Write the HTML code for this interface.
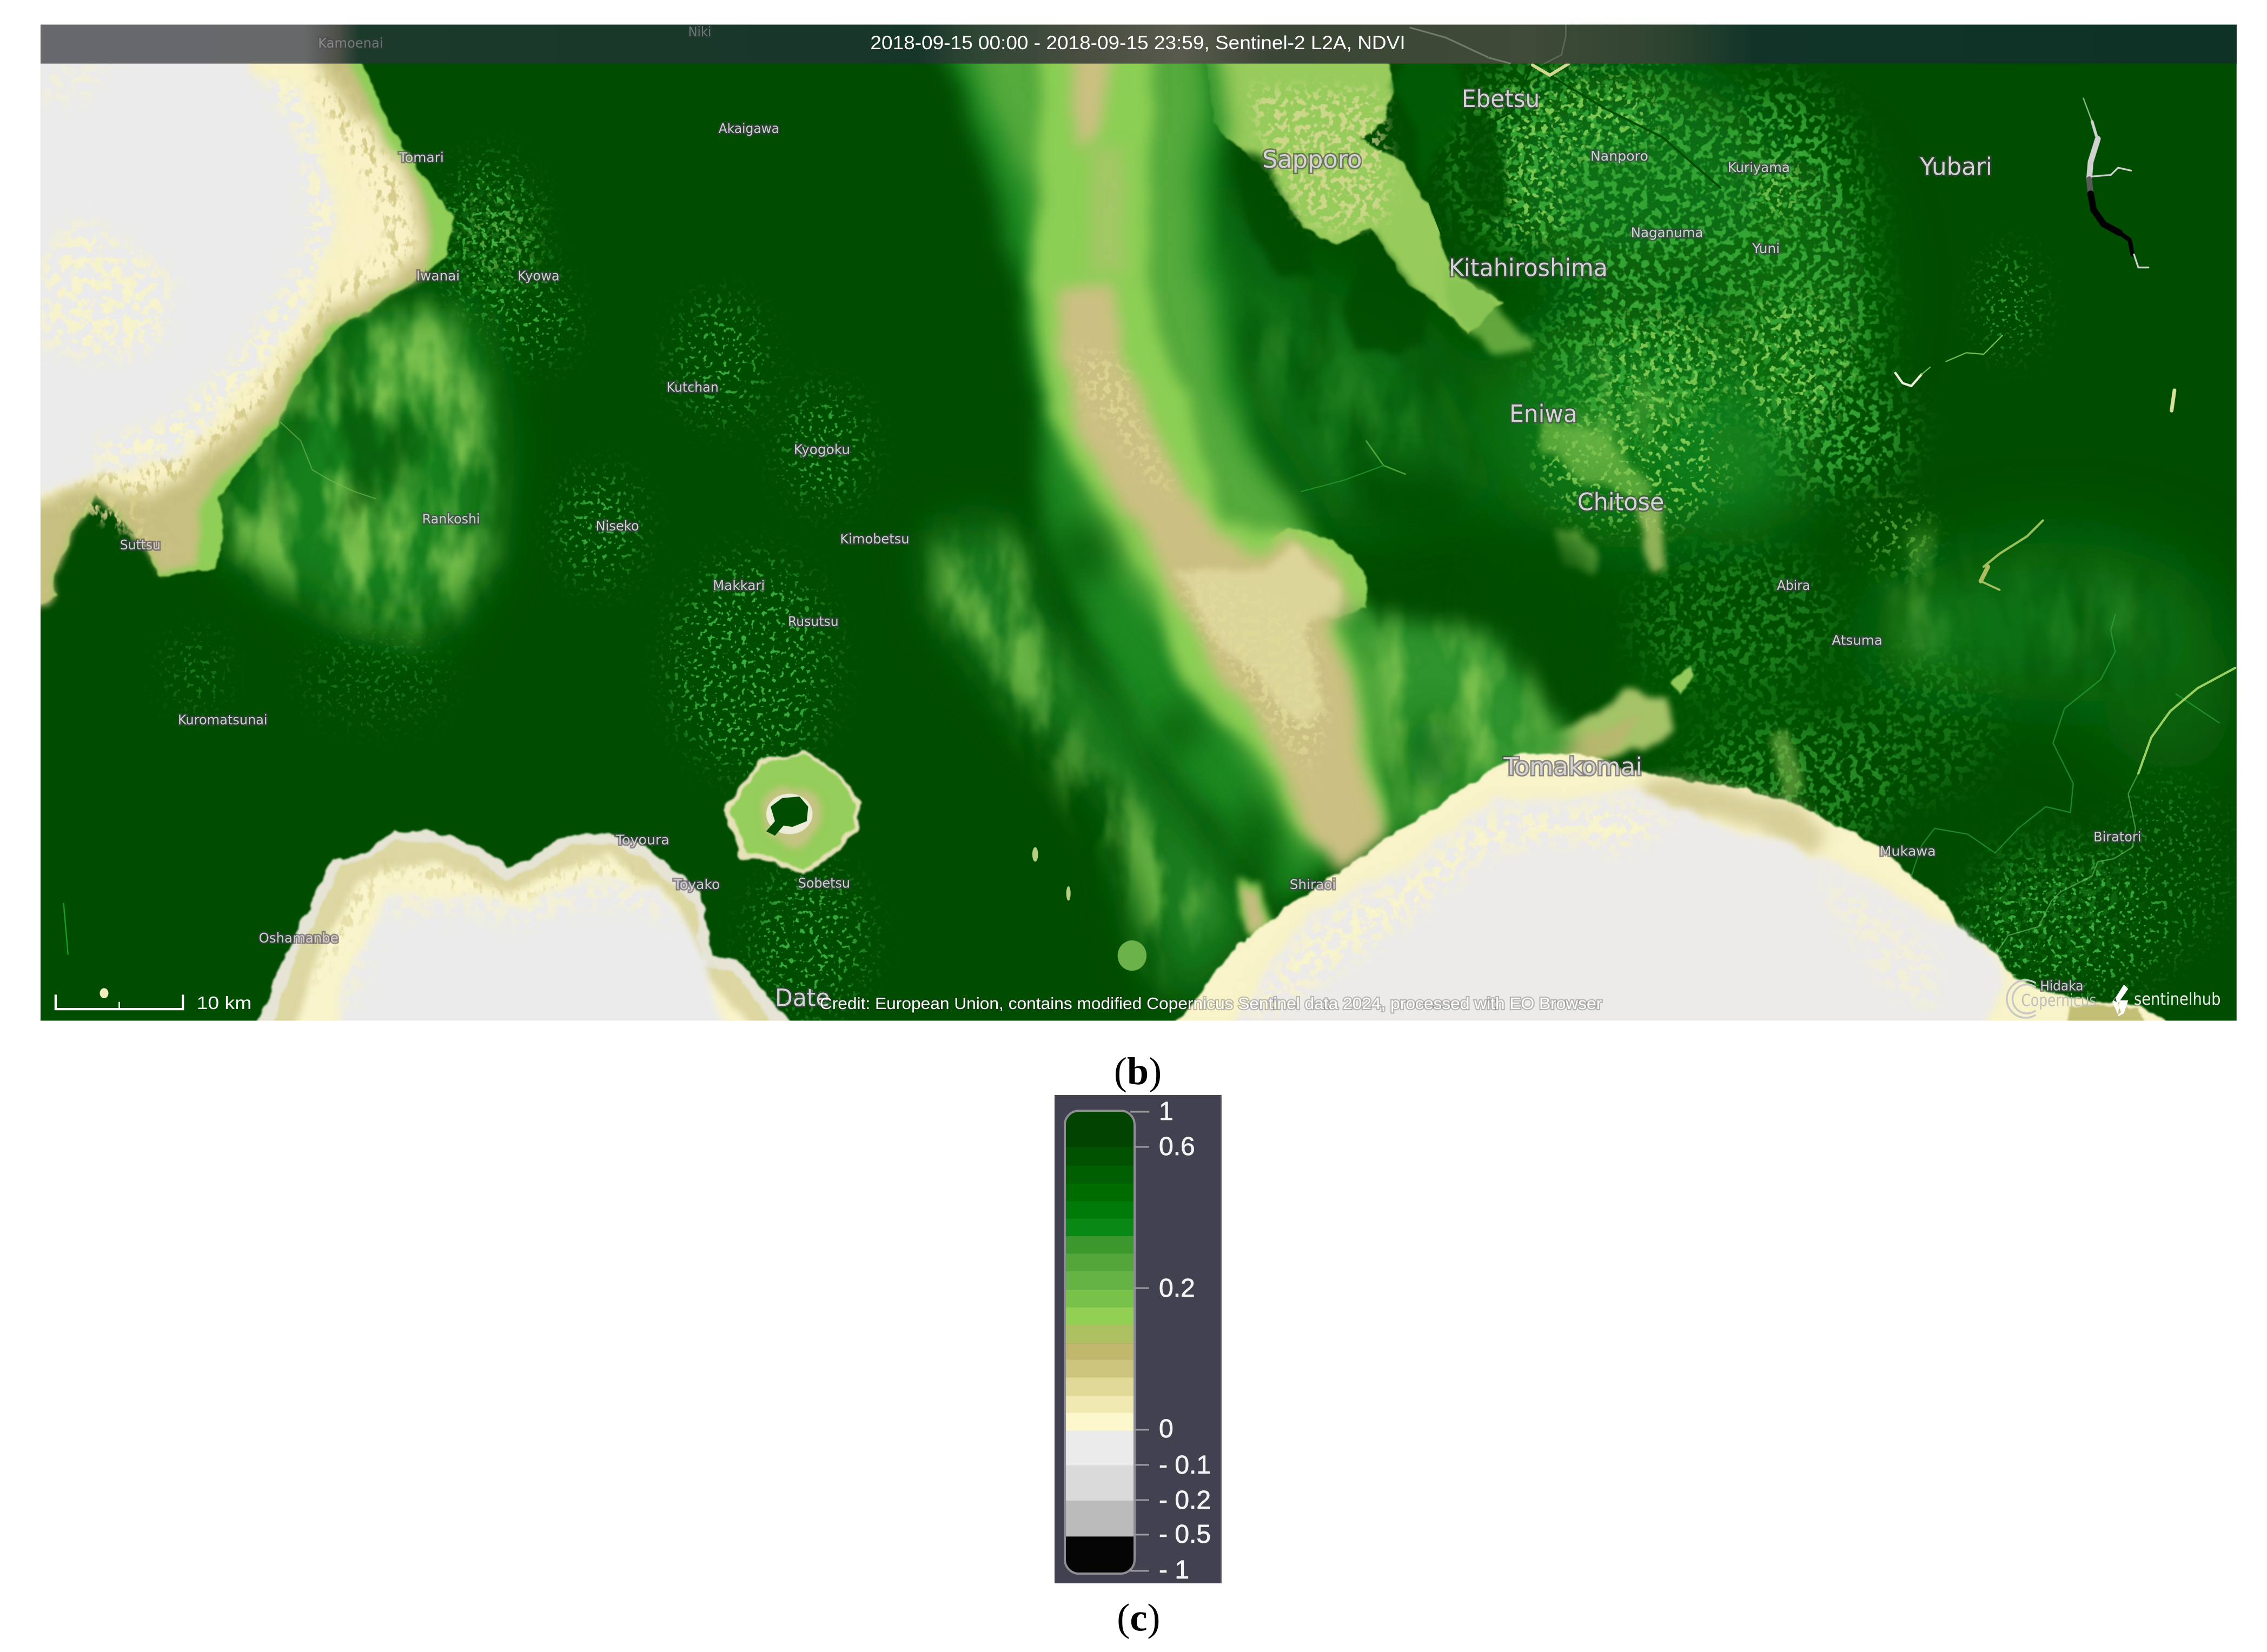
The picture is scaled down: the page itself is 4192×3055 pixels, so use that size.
<!DOCTYPE html>
<html lang="en"><head><meta charset="utf-8"><title>NDVI map</title>
<style>html,body{margin:0;padding:0;background:#fff}svg{display:block}
.s{font:9.2px "DejaVu Sans","Liberation Sans",sans-serif;fill:#d2ced4;stroke:rgba(70,60,80,.55);stroke-width:2px;paint-order:stroke}
.l{font:16.5px "DejaVu Sans","Liberation Sans",sans-serif;fill:#d4d2d4;stroke:rgba(70,65,75,.6);stroke-width:2px;paint-order:stroke}
.w{font-family:"Liberation Sans",sans-serif;fill:#fff}
.lg{font:48px "Liberation Sans",sans-serif;fill:#f4f4f6;stroke:#f4f4f6;stroke-width:.8px}
.cap{font:27px "Liberation Serif",serif;fill:#000;text-anchor:middle}
</style></head><body>
<svg xmlns="http://www.w3.org/2000/svg" width="4192" height="3055" viewBox="0 0 1568 1142.7">
<defs>
<clipPath id="mp"><rect x="28" y="17" width="1519" height="689"/></clipPath>
<linearGradient id="hd" x1="0" x2="1" y1="0" y2="0">
 <stop offset="0" stop-color="#66686c"/><stop offset=".12" stop-color="#66686a"/><stop offset=".135" stop-color="#4e5048"/><stop offset=".145" stop-color="#1c3a2a"/>
 <stop offset=".4" stop-color="#17362a"/><stop offset=".42" stop-color="#2c4432"/><stop offset=".48" stop-color="#4b4f42"/><stop offset=".52" stop-color="#575a4c"/><stop offset=".56" stop-color="#3c4636"/>
 <stop offset=".68" stop-color="#3f4a38"/><stop offset=".74" stop-color="#2e4430"/><stop offset=".78" stop-color="#123428"/><stop offset="1" stop-color="#0c3326"/>
</linearGradient>
<filter id="b30" x="-50%" y="-50%" width="200%" height="200%"><feGaussianBlur stdDeviation="26"/></filter>
<filter id="b18" filterUnits="userSpaceOnUse" x="0" y="0" width="1568" height="760"><feGaussianBlur stdDeviation="18"/></filter>
<filter id="b12" filterUnits="userSpaceOnUse" x="0" y="0" width="1568" height="760"><feGaussianBlur stdDeviation="12"/></filter>
<filter id="org" filterUnits="userSpaceOnUse" x="0" y="0" width="1568" height="760" color-interpolation-filters="sRGB">
 <feTurbulence type="fractalNoise" baseFrequency=".035 .014" numOctaves="3" seed="7"/>
 <feDisplacementMap in="SourceGraphic" scale="22" xChannelSelector="R" yChannelSelector="G"/>
 <feGaussianBlur stdDeviation="8"/></filter>
<filter id="org1" filterUnits="userSpaceOnUse" x="0" y="0" width="1568" height="760" color-interpolation-filters="sRGB">
 <feTurbulence type="fractalNoise" baseFrequency=".04 .016" numOctaves="3" seed="17"/>
 <feDisplacementMap in="SourceGraphic" scale="16" xChannelSelector="R" yChannelSelector="G"/>
 <feGaussianBlur stdDeviation="5"/></filter>
<filter id="org2" filterUnits="userSpaceOnUse" x="0" y="0" width="1568" height="760" color-interpolation-filters="sRGB">
 <feTurbulence type="fractalNoise" baseFrequency=".05 .02" numOctaves="3" seed="11"/>
 <feDisplacementMap in="SourceGraphic" scale="12" xChannelSelector="R" yChannelSelector="G"/>
 <feGaussianBlur stdDeviation="2.5"/></filter>
<filter id="sh" filterUnits="userSpaceOnUse" x="0" y="0" width="1568" height="760" color-interpolation-filters="sRGB">
 <feTurbulence type="fractalNoise" baseFrequency=".08" numOctaves="3" seed="2"/>
 <feDisplacementMap in="SourceGraphic" scale="6" xChannelSelector="R" yChannelSelector="G"/>
 <feGaussianBlur stdDeviation=".6"/></filter>
<filter id="cl" filterUnits="userSpaceOnUse" x="0" y="0" width="1568" height="760" color-interpolation-filters="sRGB">
 <feTurbulence type="fractalNoise" baseFrequency=".035 .014" numOctaves="4" seed="3" result="n"/>
 <feColorMatrix in="n" type="matrix" values="0 0 0 0 .47  0 0 0 0 .75  0 0 0 0 .3  3.5 0 0 0 -1.35" result="c"/>
 <feGaussianBlur in="c" stdDeviation="1.2" result="c2"/>
 <feGaussianBlur in="SourceGraphic" stdDeviation="12" result="m"/>
 <feComposite in="c2" in2="m" operator="in"/></filter>
<filter id="cd" filterUnits="userSpaceOnUse" x="0" y="0" width="1568" height="760" color-interpolation-filters="sRGB">
 <feTurbulence type="fractalNoise" baseFrequency=".03 .014" numOctaves="4" seed="29" result="n"/>
 <feColorMatrix in="n" type="matrix" values="0 0 0 0 .01  0 0 0 0 .33  0 0 0 0 .02  4 0 0 0 -1.8" result="c"/>
 <feGaussianBlur in="c" stdDeviation="1.2" result="c2"/>
 <feGaussianBlur in="SourceGraphic" stdDeviation="12" result="m"/>
 <feComposite in="c2" in2="m" operator="in"/></filter>
<filter id="sp1" filterUnits="userSpaceOnUse" x="0" y="0" width="1568" height="760" color-interpolation-filters="sRGB">
 <feTurbulence type="fractalNoise" baseFrequency=".2" numOctaves="2" seed="4" result="n"/>
 <feColorMatrix in="n" type="matrix" values="0 0 0 0 .2  0 0 0 0 .64  0 0 0 0 .2  9 0 0 0 -4.5" result="s"/>
 <feGaussianBlur in="SourceGraphic" stdDeviation="14" result="m"/>
 <feComposite in="s" in2="m" operator="in"/></filter>
<filter id="sp2" filterUnits="userSpaceOnUse" x="0" y="0" width="1568" height="760" color-interpolation-filters="sRGB">
 <feTurbulence type="fractalNoise" baseFrequency=".24" numOctaves="2" seed="21" result="n"/>
 <feColorMatrix in="n" type="matrix" values="0 0 0 0 .48  0 0 0 0 .78  0 0 0 0 .32  12 0 0 0 -6.9" result="s"/>
 <feGaussianBlur in="SourceGraphic" stdDeviation="10" result="m"/>
 <feComposite in="s" in2="m" operator="in"/></filter>
<filter id="sp3" filterUnits="userSpaceOnUse" x="0" y="0" width="1568" height="760" color-interpolation-filters="sRGB">
 <feTurbulence type="fractalNoise" baseFrequency=".3" numOctaves="2" seed="8" result="n"/>
 <feColorMatrix in="n" type="matrix" values="0 0 0 0 .22  0 0 0 0 .68  0 0 0 0 .24  12 0 0 0 -7.2" result="s"/>
 <feGaussianBlur in="SourceGraphic" stdDeviation="12" result="m"/>
 <feComposite in="s" in2="m" operator="in"/></filter>
<filter id="pl" filterUnits="userSpaceOnUse" x="0" y="0" width="1568" height="760" color-interpolation-filters="sRGB">
 <feTurbulence type="fractalNoise" baseFrequency=".22" numOctaves="2" seed="14" result="n"/>
 <feColorMatrix in="n" type="matrix" values="0 0 0 0 .88  0 0 0 0 .86  0 0 0 0 .6  10 0 0 0 -5" result="s"/>
 <feGaussianBlur in="SourceGraphic" stdDeviation="6" result="m"/>
 <feComposite in="s" in2="m" operator="in"/></filter>
<filter id="cr" filterUnits="userSpaceOnUse" x="0" y="0" width="1568" height="760" color-interpolation-filters="sRGB">
 <feTurbulence type="fractalNoise" baseFrequency=".14" numOctaves="3" seed="31" result="n"/>
 <feColorMatrix in="n" type="matrix" values="0 0 0 0 .98  0 0 0 0 .96  0 0 0 0 .78  9 0 0 0 -4.1" result="s"/>
 <feGaussianBlur in="SourceGraphic" stdDeviation="7" result="m"/>
 <feComposite in="s" in2="m" operator="in"/></filter>
<filter id="tx" filterUnits="userSpaceOnUse" x="0" y="0" width="1568" height="760" color-interpolation-filters="sRGB">
 <feTurbulence type="fractalNoise" baseFrequency=".2 .12" numOctaves="3" seed="41" result="n"/>
 <feColorMatrix in="n" type="matrix" values="0 0 0 0 .84  0 0 0 0 .8  0 0 0 0 .55  7 0 0 0 -3.6" result="s"/>
 <feGaussianBlur in="SourceGraphic" stdDeviation="4" result="m"/>
 <feComposite in="s" in2="m" operator="in"/></filter>
<clipPath id="barc"><rect x="1971" y="2056" width="125" height="852" rx="24"/></clipPath>
</defs>

<rect width="1568" height="1142.7" fill="#fff"/>
<g clip-path="url(#mp)">
<rect x="28" y="17" width="1519" height="689" fill="#004c00"/>

<!-- broad washes -->
<g filter="url(#b30)">
 <ellipse cx="1120" cy="300" rx="100" ry="80" fill="#127e1a" opacity=".85"/>
 <ellipse cx="1210" cy="325" rx="35" ry="40" fill="#1a8f26" opacity=".9"/>
 <ellipse cx="1420" cy="430" rx="110" ry="55" fill="#0e7a18" opacity=".8"/>
 <ellipse cx="1500" cy="480" rx="45" ry="55" fill="#0b7214" opacity=".65"/>
 <ellipse cx="1330" cy="440" rx="35" ry="40" fill="#118018" opacity=".8"/>
 <ellipse cx="1130" cy="120" rx="95" ry="70" fill="#0d7414" opacity=".9"/>
 <ellipse cx="1240" cy="200" rx="50" ry="90" fill="#0d7414" opacity=".75"/>
 <ellipse cx="930" cy="280" rx="85" ry="80" fill="#0a6a10" opacity=".8"/>
 <ellipse cx="1190" cy="480" rx="70" ry="55" fill="#065e0a" opacity=".45"/>
</g>

<!-- left cloud field -->
<path filter="url(#b18)" fill="#14801a" d="M240 215 330 215 345 300 340 385 300 440 240 430 165 385 150 345 190 290Z"/>
<path filter="url(#cl)" d="M240 215 320 215 340 300 335 395 290 440 240 420 165 385 150 345 190 290Z"/>
<path filter="url(#cd)" d="M215 235 250 240 300 300 260 370 180 350Z" opacity=".7"/>
<!-- east cloud mottling -->
<path filter="url(#cd)" d="M1320 370 1530 390 1530 490 1350 500Z" opacity=".55"/>
<path filter="url(#cl)" d="M1310 372 1345 372 1350 445 1320 450Z" opacity=".6"/>
<path filter="url(#cl)" d="M1400 390 1480 410 1490 450 1410 450Z" opacity=".22"/>
<!-- right-of-ridge forest mottling -->
<path filter="url(#b18)" fill="#0d7014" d="M810 130 860 130 900 190 985 240 1040 340 930 370 880 300 830 220Z" opacity=".8"/>
<path filter="url(#cd)" d="M820 120 900 180 1020 260 1030 350 930 360 880 290 830 200Z" opacity=".65"/>
<path filter="url(#cl)" d="M850 190 920 240 1000 300 950 340 880 280Z" opacity=".22"/>

<!-- speckled fields -->
<g filter="url(#sp1)">
 <ellipse cx="1060" cy="110" rx="55" ry="65"/><ellipse cx="1130" cy="130" rx="65" ry="85"/>
 <ellipse cx="1230" cy="150" rx="60" ry="90"/><ellipse cx="1255" cy="225" rx="45" ry="70"/>
 <ellipse cx="1130" cy="250" rx="65" ry="55"/><ellipse cx="1270" cy="300" rx="50" ry="40"/>
 <ellipse cx="1200" cy="430" rx="70" ry="50" opacity=".55"/>
 <ellipse cx="1240" cy="540" rx="75" ry="45" opacity=".7"/>
 <ellipse cx="1330" cy="500" rx="50" ry="50" opacity=".4"/>
 <ellipse cx="1420" cy="620" rx="55" ry="45" opacity=".35"/>
 <ellipse cx="340" cy="170" rx="28" ry="40" opacity=".4"/>
</g>
<g filter="url(#sp2)">
 <ellipse cx="1090" cy="80" rx="60" ry="30"/><ellipse cx="1150" cy="250" rx="50" ry="35"/>
 <ellipse cx="1060" cy="130" rx="30" ry="40"/>
 <ellipse cx="1240" cy="250" rx="40" ry="50"/><ellipse cx="1230" cy="130" rx="20" ry="25"/>
 <ellipse cx="1130" cy="320" rx="65" ry="45"/><ellipse cx="1310" cy="370" rx="25" ry="25" opacity=".6"/>
 <ellipse cx="345" cy="165" rx="25" ry="30" opacity=".7"/>
</g>
<g filter="url(#sp3)">
 <ellipse cx="340" cy="165" rx="32" ry="55"/><ellipse cx="370" cy="220" rx="25" ry="30"/>
 <ellipse cx="498" cy="250" rx="30" ry="42"/><ellipse cx="570" cy="310" rx="28" ry="40"/>
 <ellipse cx="415" cy="365" rx="28" ry="38"/><ellipse cx="520" cy="460" rx="55" ry="75"/>
 <ellipse cx="560" cy="650" rx="40" ry="50"/><ellipse cx="1390" cy="210" rx="18" ry="35"/>
 <ellipse cx="135" cy="465" rx="18" ry="25" opacity=".6"/><ellipse cx="1430" cy="640" rx="70" ry="50"/>
 <ellipse cx="1500" cy="600" rx="40" ry="60" opacity=".5"/><ellipse cx="260" cy="470" rx="50" ry="30" opacity=".4"/>
</g>

<!-- Sapporo -->
<path filter="url(#sh)" fill="#97cc5c" d="M830 10 955 10 964 62 958 83 940 96 971 112 995 157 1002 187 1039 209 1017 232 992 209 971 194 949 157 925 170 901 157 871 112 856 101 840 85Z"/>
<g filter="url(#org2)" fill="#004c00" opacity=".85">
 <path d="M858 105 874 112 901 157 915 190 885 190 866 165 857 135Z"/>
 <path d="M950 160 968 190 990 212 985 238 965 245 938 242 928 215 940 185Z"/>
 <path d="M1012 85 1028 78 1038 100 1045 150 1030 155 1012 135Z"/>
 <path d="M972 35 990 30 1005 45 1015 70 1000 100 985 130 978 90 960 60Z" fill="#005c04"/>
</g>
<path filter="url(#pl)" d="M862 62 955 62 960 110 960 150 925 160 900 150 875 100Z" opacity=".75"/>
<path filter="url(#org2)" fill="#83c250" opacity=".75" d="M995 185 1035 205 1060 240 1035 245 1005 215Z"/>

<!-- Eniwa/Chitose -->
<path filter="url(#org2)" fill="#7ec04e" opacity=".65" d="M1066 289 1110 300 1143 335 1140 345 1095 335 1068 310Z"/>
<path filter="url(#org2)" fill="#93ca5c" opacity=".75" d="M1079 368 1095 362 1103 385 1100 398 1082 390Z"/>
<path filter="url(#org2)" fill="#b2c66c" opacity=".8" d="M1132 352 1148 350 1152 395 1142 398Z"/>
<!-- Tomakomai land -->
<path filter="url(#org2)" fill="#a5c468" d="M1040 525 1089 500 1130 478 1148 482 1158 505 1135 520 1085 525Z"/>
<path filter="url(#sh)" fill="#93ca5c" d="M1155 472 1168 460 1172 468 1162 482Z"/>
<path filter="url(#org2)" fill="#c0b472" d="M1040 528 1100 505 1135 498 1128 510 1095 528Z" opacity=".7"/>
<path filter="url(#org2)" fill="#8cc258" d="M1226 510 1238 505 1248 545 1236 555Z" opacity=".55"/>

<!-- central ridge -->
<path filter="url(#org)" fill="#1e8a22" d="M648 10 668 80 690 130 703 175 712 243 722 300 722 357 745 420 770 470 800 520 840 570 885 625 965 577 960 537 946 470 945 430 890 357 862 289 850 220 845 140 850 85 840 44 830 10Z"/>
<path filter="url(#org)" fill="#55aa3c" d="M668 10 682 70 712 130 718 200 722 245 735 300 756 357 795 420 830 470 872 537 900 590 960 570 955 480 945 428 895 360 870 320 848 270 830 190 825 120 835 70 820 10Z"/>
<path filter="url(#org1)" fill="#8ccf55" d="M718 10 722 90 720 140 716 198 720 245 726 289 766 357 800 410 822 469 877 537 905 582 965 572 955 537 945 469 890 372 846 357 822 289 795 200 795 120 798 44 795 10Z"/>
<path filter="url(#sh)" fill="#92d058" d="M878 372 893 364 926 376 943 394 946 421 921 428 905 420Z"/>
<path filter="url(#org1)" fill="#cbbf82" d="M738 10 772 10 769 60 762 95 745 100 740 70ZM732 198 769 198 775 245 800 300 834 357 856 378 876 384 893 372 925 392 932 425 920 432 933 470 946 537 962 578 925 605 905 582 890 537 846 469 815 415 784 357 744 300 732 245Z"/>
<path filter="url(#org1)" fill="#a9c56a" d="M756 100 776 100 778 190 752 190Z" opacity=".8"/>
<path filter="url(#org2)" fill="#dcd59a" d="M815 395 875 395 895 376 925 405 925 424 903 432 918 490 905 505 870 470 830 430Z"/>
<path filter="url(#pl)" d="M815 395 870 410 905 430 918 500 905 530 925 560 910 540 880 500 860 470 830 430Z" opacity=".8"/>
<path filter="url(#pl)" d="M745 240 775 250 790 300 815 345 795 335 770 300 750 275Z" opacity=".7"/>

<!-- left-side clouds -->
<path filter="url(#b18)" fill="#1b8320" d="M645 367 700 365 725 440 770 480 800 530 850 600 880 625 820 700 790 640 780 560 730 510 690 470 650 420Z" opacity=".95"/>
<path filter="url(#cl)" d="M650 375 700 375 725 450 745 520 790 560 835 620 810 680 780 600 730 530 690 470 650 420Z" opacity=".9"/>
<!-- dark forest holes -->
<g filter="url(#b12)" fill="#004c00">
 <ellipse cx="750" cy="382" rx="20" ry="22" opacity=".65"/>
 <ellipse cx="815" cy="505" rx="13" ry="14" opacity=".9"/>
 <ellipse cx="868" cy="588" rx="12" ry="34" opacity=".85"/>
 <ellipse cx="1065" cy="420" rx="45" ry="55" opacity=".85"/>
 <ellipse cx="975" cy="345" rx="40" ry="22" opacity=".85"/>
</g>
<!-- right wash -->
<path filter="url(#org)" fill="#2d932c" d="M925 425 950 425 1033 440 1082 503 1085 525 964 580 958 537 945 470Z"/>
<path filter="url(#cl)" d="M945 430 1030 445 1075 505 1000 550 965 570Z"/>
<ellipse cx="990" cy="522" rx="16" ry="26" fill="#065e0a" filter="url(#b12)" opacity=".85"/>
<path filter="url(#org2)" fill="#82c050" d="M856 609 871 609 880 640 868 650 856 630Z"/>
<path filter="url(#org2)" fill="#c5bd80" d="M858 615 870 615 874 638 864 645Z"/>
<path filter="url(#cl)" d="M1100 250 1170 280 1150 340 1080 300Z" opacity=".6"/>

<!-- island -->
<path filter="url(#sh)" fill="#e6e2b8" d="M501 561 525 525 546 522 557 519 580 534 595 555 593 573 574 594 555 606 536 597 513 594Z"/>
<path fill="#95ce5a" filter="url(#sh)" d="M505 561 527 528 546 524 557 522 578 536 592 556 590 572 572 591 555 602 538 594 517 590Z"/>
<ellipse cx="546" cy="563" rx="22" ry="20" fill="#c5c482" filter="url(#org2)"/>
<ellipse cx="546" cy="563" rx="16" ry="14" fill="#ececd8"/>
<path fill="#004c00" d="M533 558 541 552 553 551 559 558 558 568 548 572 542 571 536 578 530 575 536 568Z"/>
<ellipse cx="783" cy="661" rx="10" ry="10.5" fill="#6cb24a"/>
<ellipse cx="716" cy="591" rx="2" ry="5" fill="#b5d080"/><ellipse cx="739" cy="618" rx="1.5" ry="5" fill="#b5d080"/>

<!-- top-left sea -->
<path filter="url(#sh)" fill="#8fcf58" d="M251 0 251 44 269 87 305 137 314 150 309 177 279 200 236 225 207 262 193 292 152 343 154 380 147 393 111 399 104 385 85 360 68 343 52 365 37 398 39 412 28 420 10 420 10 0Z"/>
<path filter="url(#org2)" fill="#c7bf80" d="M242 0 242 44 259 85 292 129 300 167 293 190 267 205 234 222 207 258 190 290 150 335 140 345 135 388 112 396 104 385 85 360 68 343 52 365 37 398 39 412 28 420 10 420 10 0Z"/>
<path filter="url(#org1)" fill="#f8f2c6" d="M222 0 222 44 250 85 284 129 291 172 270 195 225 218 195 258 170 290 130 325 100 345 60 335 28 345 10 345 10 0Z"/>
<path filter="url(#tx)" d="M230 44 262 95 285 135 288 180 240 212 200 260 170 300 125 335 95 355 120 385 50 350 28 350 60 330 130 310 175 270 225 205 270 170 250 120 215 60Z"/>
<path filter="url(#org2)" fill="#ebebeb" d="M10 0 170 0 172 50 200 58 216 85 222 110 232 142 231 167 207 217 171 267 123 317 64 327 28 343 10 343Z"/>
<path filter="url(#cr)" d="M175 40 205 50 225 100 235 150 220 200 180 260 130 310 70 325 60 310 120 290 170 240 215 170 210 100Z"/>
<path filter="url(#cr)" d="M55 150 120 190 110 240 70 250 28 240 28 180Z" opacity=".85"/>
<path filter="url(#cr)" d="M28 44 80 44 60 70 28 70Z" opacity=".5"/>
<!-- mid sea -->
<path filter="url(#sh)" fill="#e6e4d4" d="M170 730 198 661 230 595 252 590 273 575 300 575 330 585 351 600 370 590 397 577 427 577 450 588 485 617 492 661 511 665 565 730Z"/>
<path filter="url(#sh)" fill="#ddd7a2" d="M182 730 205 661 236 598 256 593 273 582 300 582 328 592 350 610 372 598 397 584 427 584 445 594 480 625 486 668 507 672 552 730Z"/>
<path filter="url(#org2)" fill="#f9f4cc" d="M192 730 222 660 250 605 300 596 350 618 375 606 420 590 465 626 484 670 538 730Z"/>
<path filter="url(#tx)" d="M210 690 240 620 265 595 330 600 350 615 400 592 440 600 478 650 515 700 490 670 465 630 420 605 350 625 270 605 240 650Z" opacity=".55"/>
<path filter="url(#org2)" fill="#ebebeb" d="M228 730 240 673 262 632 270 618 330 620 360 626 412 606 450 614 475 640 490 665 504 730Z"/>
<path filter="url(#cr)" d="M265 615 330 618 360 625 410 605 450 615 470 640 440 630 410 625 360 640 320 630 270 635Z" opacity=".7"/>
<path filter="url(#cr)" d="M235 660 255 640 250 690 232 700Z" opacity=".6"/>
<!-- right sea -->
<path filter="url(#sh)" fill="#f8f3c8" d="M795 730 815 706 855 655 887 630 964 577 1047 523 1089 520 1137 535 1207 546 1246 558 1272 572 1300 585 1319 603 1347 627 1360 647 1381 659 1393 677 1425 688 1451 692 1479 696 1498 706 1510 730Z"/>
<path filter="url(#org1)" fill="#cfc68c" d="M1137 537 1207 548 1246 560 1262 575 1250 590 1210 570 1170 565 1130 552Z" opacity=".8"/>
<path filter="url(#sh)" fill="#c4bf76" d="M1425 730 1432 696 1451 694 1479 698 1490 730Z"/>
<path filter="url(#org2)" fill="#ecebe9" d="M848 730 856 702 908 632 971 600 1033 552 1082 554 1127 545 1165 560 1239 585 1271 598 1320 625 1352 640 1381 662 1386 682 1362 730Z"/>
<path filter="url(#cr)" d="M860 700 905 640 970 605 1030 560 1082 560 1120 552 1160 570 1120 590 1085 580 1030 590 970 640 910 680 875 705Z" opacity=".9"/>
<path filter="url(#cr)" d="M1250 600 1300 625 1340 660 1340 700 1310 690 1280 650Z" opacity=".5"/>

<!-- lake and streams -->
<g fill="none" stroke-linecap="round" stroke-linejoin="round">
 <path stroke="#8fb888" stroke-width=".9" d="M1441 68 1444 76 1447 84"/>
 <path stroke="#cfd2cf" stroke-width="2" d="M1447 84 1450 94"/>
 <path stroke="#cfd2cf" stroke-width="4" d="M1451 96 1446 112 1445 124"/>
 <path stroke="#cfd2cf" stroke-width="1.2" d="M1447 122 1460 121 1465 116 1474 118"/>
 <path stroke="#5a5a5a" stroke-width="4" d="M1445 124 1446 134"/>
 <path stroke="#000" stroke-width="4.5" d="M1446 134 1448 145 1455 155 1466 161"/>
 <path stroke="#000" stroke-width="3" d="M1466 161 1473 166 1475 176"/>
 <path stroke="#cfd2cf" stroke-width="1.2" d="M1476 176 1479 185 1486 185"/>
 <path stroke="#f0f2dc" stroke-width="1.6" d="M1311 258 1316 265 1322 267 1329 259"/>
 <path stroke="#7dc555" stroke-width=".8" d="M1329 259 1335 254M1346 250 1360 244 1372 245 1385 232"/>
 <path stroke="#d8e09a" stroke-width="2.6" d="M1504 270 1502 284"/>
 <path stroke="#9ac05c" stroke-width="1.6" d="M1413 360 1402 371 1383 383 1372 392"/>
 <path stroke="#b0bc62" stroke-width="3" d="M1375 392 1370 402"/>
 <path stroke="#a8c060" stroke-width="1.4" d="M1370 402 1383 408"/>
 <g opacity=".6">
 <path stroke="#2fae4a" stroke-width=".9" d="M1463 425 1460 436 1463 451 1453 470 1428 490 1420 514 1434 542 1432 562 1415 558 1396 573 1380 590 1361 577 1338 573 1329 585 1322 606"/>
 <path stroke="#6cc065" stroke-width=".9" d="M1479 535 1472 549 1477 573 1475 586 1462 594 1451 596 1447 606 1425 617 1419 623 1410 641 1389 647 1381 659"/>
 <path stroke="#2fae4a" stroke-width=".9" d="M1505 480 1520 490 1535 500"/>
 <path stroke="#7dbb58" stroke-width=".8" d="M194 292 208 305 216 325 228 332 245 340 260 345"/>
 <path stroke="#7fd05e" stroke-width="1" d="M945 305 957 322 972 328"/>
 <path stroke="#2fb03c" stroke-width=".8" d="M900 340 930 332 957 322"/>
 </g>
 <path stroke="#9cd060" stroke-width="1.6" d="M1546 462 1520 476 1501 492 1488 510 1479 535"/>
 <path stroke="#14a024" stroke-width=".9" d="M44 625 47 660"/>
 <path stroke="#004c00" stroke-width="1.4" d="M1000 170 985 130 1010 95 1045 78 1060 45M1060 45 1085 60 1110 75 1150 95 1190 130"/>
 <path stroke="#d4d88e" stroke-width="2.2" d="M1060 45 1072 52 1085 44"/>
</g>
<ellipse cx="72" cy="687" rx="3" ry="3.5" fill="#f0ecc0"/>

<!-- header -->
<rect x="28" y="17" width="1519" height="27" fill="url(#hd)"/>
<path fill="none" stroke="#707a64" stroke-width="1.2" d="M975 19 1000 26 1030 40 1045 44"/>
<path fill="none" stroke="#5c6a54" stroke-width="1" d="M1068 44 1080 38 1083 25 1083 17"/>
<text class="w" x="602" y="34" font-size="13" textLength="370" lengthAdjust="spacingAndGlyphs">2018-09-15 00:00 - 2018-09-15 23:59, Sentinel-2 L2A, NDVI</text>

<!-- small labels -->
<g style="opacity:.42"><text class="s" x="220" y="33" textLength="45" lengthAdjust="spacingAndGlyphs">Kamoenai</text><text class="s" x="476" y="25" textLength="16" lengthAdjust="spacingAndGlyphs">Niki</text></g>
<text class="s" x="497" y="92" textLength="42" lengthAdjust="spacingAndGlyphs">Akaigawa</text>
<text class="s" x="276" y="112" textLength="31" lengthAdjust="spacingAndGlyphs">Tomari</text>
<text class="s" x="288" y="194" textLength="30" lengthAdjust="spacingAndGlyphs">Iwanai</text>
<text class="s" x="358" y="194" textLength="29" lengthAdjust="spacingAndGlyphs">Kyowa</text>
<text class="s" x="461" y="271" textLength="36" lengthAdjust="spacingAndGlyphs">Kutchan</text>
<text class="s" x="549" y="314" textLength="39" lengthAdjust="spacingAndGlyphs">Kyogoku</text>
<text class="s" x="292" y="362" textLength="40" lengthAdjust="spacingAndGlyphs">Rankoshi</text>
<text class="s" x="412" y="367" textLength="30" lengthAdjust="spacingAndGlyphs">Niseko</text>
<text class="s" x="581" y="376" textLength="48" lengthAdjust="spacingAndGlyphs">Kimobetsu</text>
<text class="s" x="83" y="380" textLength="28" lengthAdjust="spacingAndGlyphs">Suttsu</text>
<text class="s" x="493" y="408" textLength="36" lengthAdjust="spacingAndGlyphs">Makkari</text>
<text class="s" x="545" y="433" textLength="35" lengthAdjust="spacingAndGlyphs">Rusutsu</text>
<text class="s" x="123" y="501" textLength="62" lengthAdjust="spacingAndGlyphs">Kuromatsunai</text>
<text class="s" x="426" y="584" textLength="37" lengthAdjust="spacingAndGlyphs">Toyoura</text>
<text class="s" x="466" y="615" textLength="32" lengthAdjust="spacingAndGlyphs">Toyako</text>
<text class="s" x="552" y="614" textLength="36" lengthAdjust="spacingAndGlyphs">Sobetsu</text>
<text class="s" x="179" y="652" textLength="55" lengthAdjust="spacingAndGlyphs">Oshamanbe</text>
<text class="s" x="892" y="615" textLength="32" lengthAdjust="spacingAndGlyphs">Shiraoi</text>
<text class="s" x="1100" y="111" textLength="40" lengthAdjust="spacingAndGlyphs">Nanporo</text>
<text class="s" x="1195" y="119" textLength="43" lengthAdjust="spacingAndGlyphs">Kuriyama</text>
<text class="s" x="1128" y="164" textLength="50" lengthAdjust="spacingAndGlyphs">Naganuma</text>
<text class="s" x="1212" y="175" textLength="19" lengthAdjust="spacingAndGlyphs">Yuni</text>
<text class="s" x="1229" y="408" textLength="23" lengthAdjust="spacingAndGlyphs">Abira</text>
<text class="s" x="1267" y="446" textLength="35" lengthAdjust="spacingAndGlyphs">Atsuma</text>
<text class="s" x="1300" y="592" textLength="39" lengthAdjust="spacingAndGlyphs">Mukawa</text>
<text class="s" x="1448" y="582" textLength="33" lengthAdjust="spacingAndGlyphs">Biratori</text>
<text class="s" x="1411" y="685" textLength="30" lengthAdjust="spacingAndGlyphs">Hidaka</text>
<!-- large labels -->
<text class="l" x="1011" y="74" textLength="54" lengthAdjust="spacingAndGlyphs">Ebetsu</text>
<text class="l" x="873" y="116" textLength="69" lengthAdjust="spacingAndGlyphs">Sapporo</text>
<text class="l" x="1002" y="191" textLength="110" lengthAdjust="spacingAndGlyphs">Kitahiroshima</text>
<text class="l" x="1044" y="292" textLength="47" lengthAdjust="spacingAndGlyphs">Eniwa</text>
<text class="l" x="1091" y="353" textLength="60" lengthAdjust="spacingAndGlyphs">Chitose</text>
<text class="l" x="1040" y="536" textLength="96" lengthAdjust="spacingAndGlyphs">Tomakomai</text>
<text class="l" x="1328" y="121" textLength="50" lengthAdjust="spacingAndGlyphs">Yubari</text>
<text class="l" x="536" y="696" textLength="38" lengthAdjust="spacingAndGlyphs">Date</text>

<!-- scale bar -->
<path fill="none" stroke="#fff" stroke-width="1.6" d="M38.5 688V698H126.5V688"/>
<path fill="none" stroke="#fff" stroke-width="1" d="M82.5 693V698"/>
<text class="w" x="136" y="698" font-size="12.5" textLength="38" lengthAdjust="spacingAndGlyphs">10 km</text>
<!-- credit -->
<text class="w" x="567" y="698" font-size="11.5" textLength="541" lengthAdjust="spacingAndGlyphs" style="stroke:rgba(40,40,40,.28);stroke-width:1.6px;paint-order:stroke">Credit: European Union, contains modified Copernicus Sentinel data 2024, processed with EO Browser</text>
<!-- logos -->
<g fill="none" stroke="#c8c8c8" stroke-width="1.3"><path d="M1408 680A13 13 0 1 0 1408 702"/><path d="M1408 683A10 10 0 1 0 1408 699"/></g>
<text x="1398" y="696" textLength="52" lengthAdjust="spacingAndGlyphs" style="font:11.5px 'DejaVu Sans',sans-serif;fill:#bdbdbd">Copernicus</text>
<path fill="#fff" d="M1469 681 1462 692 1465 694 1472 684ZM1472 692 1466 692 1465 703 1469 701ZM1461 693 1463 690 1467 700 1465 702Z"/>
<text x="1476" y="695" textLength="60" lengthAdjust="spacingAndGlyphs" style="font:11.5px 'DejaVu Sans',sans-serif;fill:#eee">sentinelhub</text>
</g>

<!-- (b) -->
<text class="cap" x="787" y="750"><tspan>(</tspan><tspan font-weight="bold">b</tspan><tspan>)</tspan></text>

<!-- legend -->
<g transform="scale(.37405)">
<rect x="1950" y="2025" width="309" height="903" fill="#42414f"/>
<rect x="2257" y="2025" width="2" height="903" fill="#6e6e78"/>
<g clip-path="url(#barc)">
<rect x="1971" y="2056" width="125" height="66" fill="#004400"/>
<rect x="1971" y="2121" width="125" height="35" fill="#005200"/>
<rect x="1971" y="2155.6" width="125" height="34" fill="#005f00"/>
<rect x="1971" y="2188.7" width="125" height="33" fill="#006c00"/>
<rect x="1971" y="2221.2" width="125" height="33" fill="#007a08"/>
<rect x="1971" y="2253.6" width="125" height="33" fill="#0a8816"/>
<rect x="1971" y="2286" width="125" height="33" fill="#3a982c"/>
<rect x="1971" y="2318.4" width="125" height="33" fill="#52a63a"/>
<rect x="1971" y="2350.8" width="125" height="34" fill="#65b344"/>
<rect x="1971" y="2384.7" width="125" height="34" fill="#79c24a"/>
<rect x="1971" y="2417.8" width="125" height="33" fill="#91d052"/>
<rect x="1971" y="2450.2" width="125" height="34" fill="#aec162"/>
<rect x="1971" y="2484.1" width="125" height="31" fill="#c0b66c"/>
<rect x="1971" y="2514.3" width="125" height="34" fill="#cdc57e"/>
<rect x="1971" y="2547.5" width="125" height="34" fill="#e0d998"/>
<rect x="1971" y="2581.4" width="125" height="31" fill="#f0e9b2"/>
<rect x="1971" y="2612.3" width="125" height="34" fill="#fdf8cc"/>
<rect x="1971" y="2645.4" width="125" height="65" fill="#ebebeb"/>
<rect x="1971" y="2710.3" width="125" height="65" fill="#dadada"/>
<rect x="1971" y="2775" width="125" height="67" fill="#bbb"/>
<rect x="1971" y="2841.4" width="125" height="67" fill="#050505"/>
</g>
<rect x="1969" y="2054" width="129" height="856" rx="26" fill="none" stroke="#8d8d92" stroke-width="4"/>
<path stroke="#9a9aa0" stroke-width="3" fill="none" d="M2090 2056H2125M2098 2121H2125M2098 2382H2125M2098 2644H2125M2098 2709H2125M2098 2774H2125M2098 2838H2125M2090 2905H2125"/>
<text class="lg" x="2143" y="2071">1</text>
<text class="lg" x="2143" y="2136">0.6</text>
<text class="lg" x="2143" y="2398">0.2</text>
<text class="lg" x="2143" y="2658">0</text>
<text class="lg" x="2143" y="2725">- 0.1</text>
<text class="lg" x="2143" y="2790">- 0.2</text>
<text class="lg" x="2143" y="2853">- 0.5</text>
<text class="lg" x="2143" y="2919">- 1</text>
</g>

<!-- (c) -->
<text class="cap" x="787.5" y="1128"><tspan>(</tspan><tspan font-weight="bold">c</tspan><tspan>)</tspan></text>
</svg>
</body></html>
